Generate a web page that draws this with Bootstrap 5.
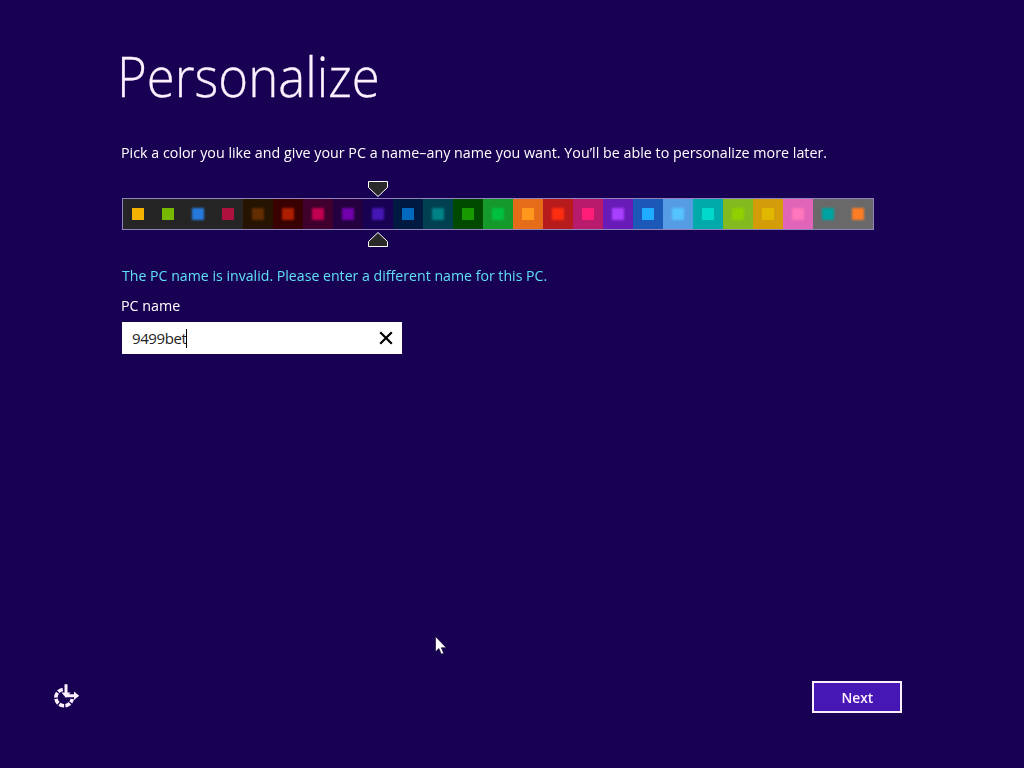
<!DOCTYPE html>
<html lang="en">
<head>
<meta charset="utf-8">
<title>Personalize</title>
<link href="https://cdn.jsdelivr.net/npm/bootstrap@5.3.0/dist/css/bootstrap.min.css" rel="stylesheet">
<style>
  body { background: #180052; color: #fff; font: 15px/20px "Open Sans", "Noto Sans", sans-serif; }
  .setup-page { width: 1024px; height: 768px; padding: 43px 122px 55px; }
  h1 { font-size: 55px; font-weight: 300; line-height: 66px; margin-left: -5px; color: #fdf0ff; -webkit-text-stroke: .3px #fdf0ff; }
  .fit { display: inline-block; white-space: nowrap; transform-origin: 0 50%; }
  .fit-title { transform: scaleX(.926); }
  .fit-intro { transform: scaleX(.953); margin-left: -1px; }
  .fit-warning { transform: scaleX(.943); }
  .fit-next { transform: scaleX(.92); transform-origin: 50% 50%; }
  .fit-name { letter-spacing: -.42px; }
  .intro { margin-top: 33px; height: 20px; }
  .picker { margin-top: 19px; width: 752px; }
  .marker { margin-left: 246px; width: 20px; }
  .strip { height: 32px; border: 1px solid #9184bd; }
  .swatch { background: var(--back); }
  .swatch i { width: 12px; height: 12px; background: var(--dot); }
  .swatch.soft i { filter: blur(1px); }
  .warning-line { margin-top: 17px; height: 20px; color: #5fe0f8; }
  .name-label { margin-top: 10px; height: 20px; }
  .name-box { margin-top: 7px; width: 280px; height: 32px; background: #fff; color: #222; padding: 0 8px 0 10px; }
  .caret { width: 1px; height: 19px; background: #000; }
  .btn-next { width: 90px; height: 32px; border: 2px solid #fbeeff; border-radius: 0; background: #4617b4; color: #fdf0ff; font-size: 15px; line-height: 20px; font-weight: 600; padding: 0; }
  .ease { margin-left: -70px; }
  .pointer { left: 435px; top: 636px; }
</style>
</head>
<body>
<main class="setup-page d-flex flex-column position-relative overflow-hidden">
  <h1 class="mb-0"><span class="fit fit-title">Personalize</span></h1>
  <div class="intro"><span class="fit fit-intro">Pick a color you like and give your PC a name–any name you want. You’ll be able to personalize more later.</span></div>
  <div class="picker d-flex flex-column">
    <svg class="marker" height="17" viewBox="0 0 20 17"><path d="M.5.500h19v6L10 15.500.5 6.500z" fill="#292929" stroke="#fff"/></svg>
    <div class="strip d-flex" id="strip"></div>
    <svg class="marker" height="18" viewBox="0 0 20 18"><path d="M.5 16.500h19v-5L10 2.500.5 11.500z" fill="#292929" stroke="#fff"/></svg>
  </div>
  <div class="warning-line"><span class="fit fit-warning">The PC name is invalid. Please enter a different name for this PC.</span></div>
  <label class="name-label"><span class="fit fit-intro">PC name</span></label>
  <div class="name-box d-flex align-items-center">
    <span class="fit fit-name">9499bet</span><span class="caret"></span>
    <svg class="ms-auto" width="16" height="16" viewBox="0 0 16 16"><path d="M2.200 2.200l11.600 11.600M13.800 2.200L2.200 13.800" stroke="#000" stroke-width="2.200"/></svg>
  </div>
  <div class="d-flex justify-content-between align-items-center mt-auto">
    <svg class="ease" width="28" height="28" viewBox="52 683 28 28" fill="none" stroke="#fdf0ff">
      <path d="M62.800 689.500A8.200 8.200 0 1 0 72.200 699" stroke-width="3.600" stroke-dasharray="5.100 1.300"/>
      <path d="M66 684.200v9.500M67 695.700h8" stroke-width="3"/>
      <path d="M61.500 692.500h9l-4.500 5.500zM74 691.500v8.400l5.200-4.200z" fill="#fdf0ff" stroke="none"/>
    </svg>
    <button class="btn btn-next" type="button"><span class="fit fit-next">Next</span></button>
  </div>
  <svg class="pointer position-absolute" width="13" height="20" viewBox="0 0 13 20"><path d="M.5.500v15.300l3.400-3.300 2.400 5.700 2.400-1-2.400-5.500h4.900z" fill="#fff" stroke="#090022" stroke-width=".6"/></svg>
</main>
<script>
  // strip colour, accent colour, soft edge
  const themes = [
    ["#252525","#f3b200"],["#252525","#77b900"],["#252525","#2579dc",1],["#252525","#ae113d"],
    ["#261300","#632f00",1],["#380000","#b01e00",1],["#40002e","#c1004f",1],["#250040","#7200ac",1],
    ["#180052","#4617b4",1],["#001940","#006ac1"],["#004050","#008287",1],["#004a00","#199900"],
    ["#15992a","#00c13f",1],["#e56c19","#ff981d"],["#b81b1b","#ff2e12",1],["#b81b6c","#ff1d77"],
    ["#691bb8","#aa40ff",1],["#1b58b8","#1faeff"],["#569ce3","#56c5ff",1],["#00aaaa","#00d8cc"],
    ["#83ba1f","#91d100",1],["#d39d09","#e1b700"],["#e064b7","#ff76bc",1],["#696969","#00a3a3",1],
    ["#696969","#fe7c22",1]
  ];
  document.getElementById("strip").innerHTML = themes.map(([back, dot, soft]) =>
    `<div class="swatch flex-fill d-flex align-items-center justify-content-center${soft ? " soft" : ""}" style="--back:${back};--dot:${dot}"><i></i></div>`).join("");
</script>
<script src="https://cdn.jsdelivr.net/npm/bootstrap@5.3.0/dist/js/bootstrap.bundle.min.js"></script>
</body>
</html>
